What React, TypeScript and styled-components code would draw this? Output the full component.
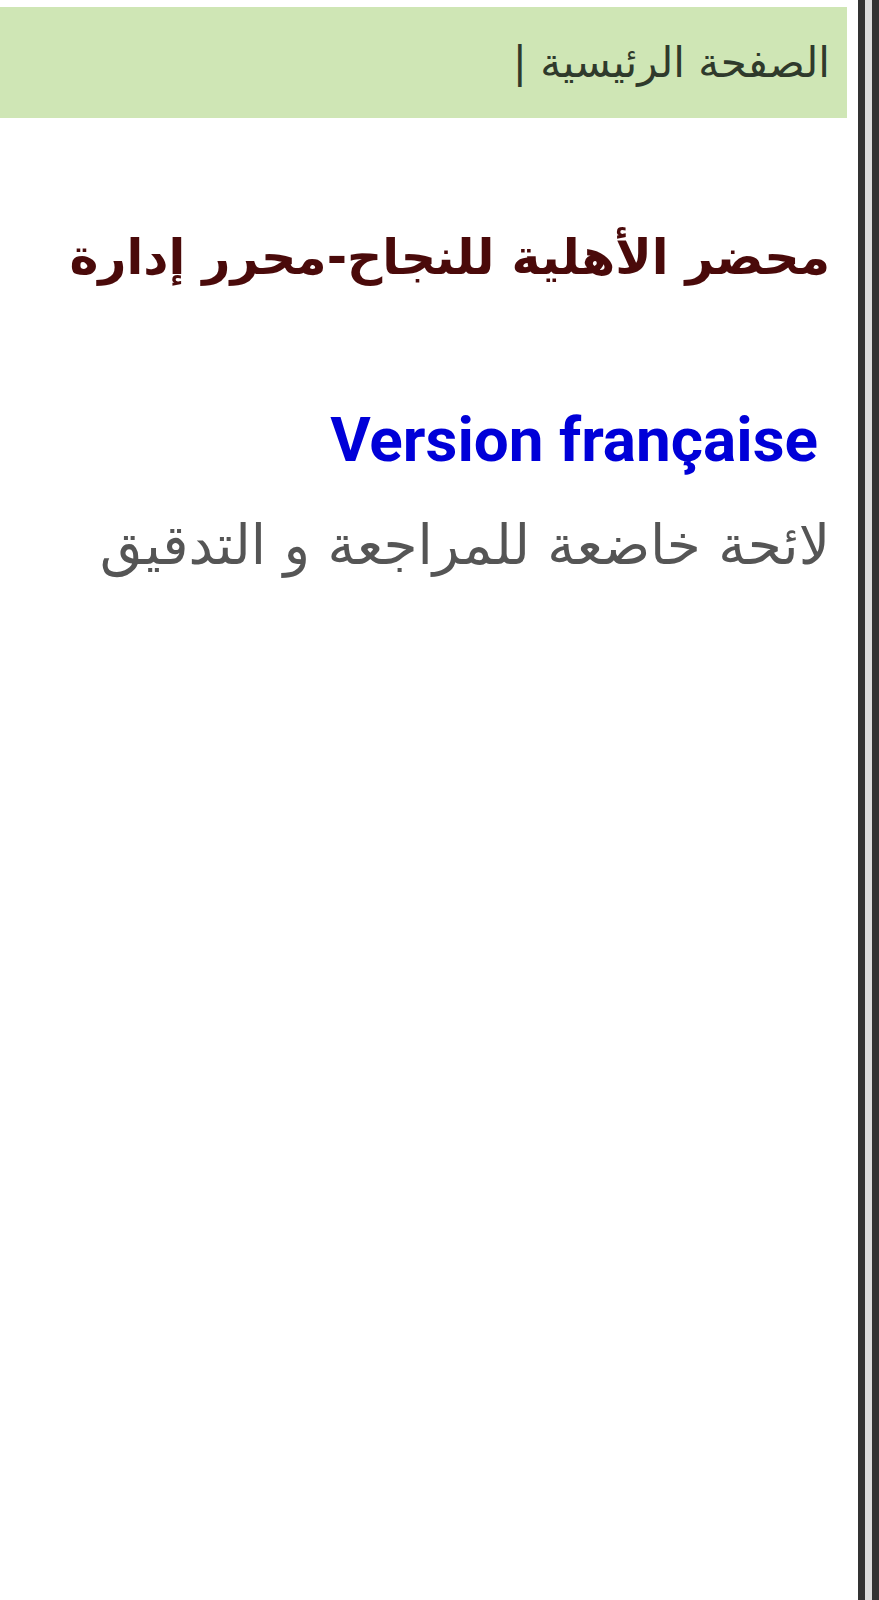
import React from "react"
import styled, { createGlobalStyle } from "styled-components"

const GlobalStyle = createGlobalStyle`
  html, body {
    margin: 0;
    padding: 0;
    background: #ffffff;
  }
  body {
    font-family: "DejaVu Sans", "Noto Sans", sans-serif;
  }
`

const Page = styled.div`
  display: flex;
  width: 879px;
  min-height: 1600px;
  direction: ltr;
`

const Main = styled.main`
  width: 847px;
  flex-shrink: 0;
  direction: rtl;
  padding-top: 7px;
`

const Banner = styled.header`
  height: 111px;
  background: #cfe6b5;
  display: flex;
  align-items: center;
  padding-right: 17px;
`

const Crumb = styled.span`
  font-size: 42px;
  color: #2f3a2c;
`

const Title = styled.h1`
  margin: 108px 17px 0 0;
  font-size: 49px;
  font-weight: 700;
  line-height: 64px;
  color: #4a0a0a;
`

const Section = styled.section`
  margin-top: 115px;
  padding-right: 17px;
  display: flex;
  flex-direction: column;
  gap: 35px;
`

const LangLink = styled.a`
  font-family: Roboto, "Liberation Sans", sans-serif;
  font-size: 62px;
  font-weight: 700;
  color: #0000d8;
  text-decoration: none;
  line-height: 70px;
  padding-right: 12px;
  direction: ltr;
  text-align: right;
`

const Note = styled.p`
  margin: 0;
  font-size: 55px;
  color: #555555;
  line-height: 70px;
`

const ScrollEdge = styled.div`
  margin-left: 11px;
  width: 21px;
  flex-shrink: 0;
  background: linear-gradient(
    to right,
    #333333 0,
    #333333 7px,
    #dcdcdc 7px,
    #dcdcdc 14px,
    #333333 14px
  );
`

export default function App() {
  return (
    <>
      <GlobalStyle />
      <Page>
        <Main>
          <Banner>
            <Crumb>الصفحة الرئيسية |</Crumb>
          </Banner>
          <Title>محضر الأهلية للنجاح-محرر إدارة</Title>
          <Section>
            <LangLink href="#">Version française</LangLink>
            <Note>لائحة خاضعة للمراجعة و التدقيق</Note>
          </Section>
        </Main>
        <ScrollEdge />
      </Page>
    </>
  )
}
